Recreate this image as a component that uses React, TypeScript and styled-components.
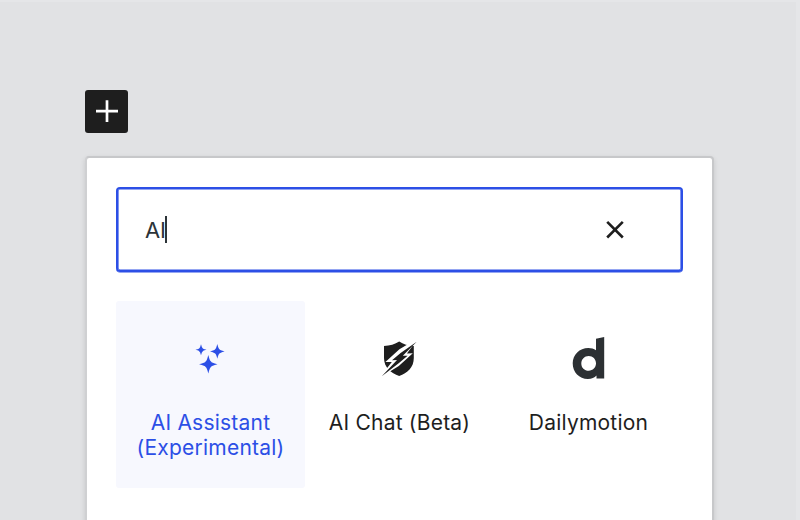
import React from "react";
import styled, { createGlobalStyle } from "styled-components";

const GlobalStyle = createGlobalStyle`
  * { box-sizing: border-box; }
  body { margin: 0; overflow: hidden; background: #e1e2e4; }
`;

const Canvas = styled.main`
  display: flex;
  flex-direction: column;
  align-items: flex-start;
  width: 800px;
  height: 520px;
  padding: 88px 0 0 85px;
  overflow: hidden;
  background: #e1e2e4;
  border-top: 2px solid #e5e6e8;
  border-right: 4px solid #e5e6e8;
  font-family: Inter, "Liberation Sans", sans-serif;
  color: #1e1e1e;
`;

const InserterToggle = styled.button`
  display: flex;
  width: 43.4px;
  height: 43px;
  padding: 0;
  border: 0;
  border-radius: 3px;
  background: #1e1e1e;
`;

const Popover = styled.section`
  flex: none;
  width: 629px;
  height: 420px;
  margin-top: 23px;
  padding: 29px 29px 0;
  background: #fff;
  background-clip: padding-box;
  border: 2px solid #c7c8ca;
  border-left-color: #cfd0d2;
  border-radius: 4px;
  box-shadow: 0 2px 5px rgba(0, 0, 0, 0.12);
`;

const SearchField = styled.label`
  display: flex;
  align-items: center;
  justify-content: space-between;
  width: 567px;
  height: 85px;
  padding: 0 51px 0 27px;
  border: 2px solid #2c4fe6;
  border-radius: 4px;
  box-shadow: inset 0 0 0 0.6px #2c4fe6, 0 0.5px 0 #2c4fe6;
`;

const Query = styled.span`
  display: flex;
  align-items: center;
  font-size: 22px;
  letter-spacing: -0.3px;
  color: #2c3338;
`;

const Caret = styled.i`
  width: 2px;
  height: 27px;
  margin-left: -1px;
  background: #2c3338;
`;

const Results = styled.div`
  display: grid;
  grid-template-columns: repeat(3, 189px);
  margin-top: 29px;
`;

const BlockTile = styled.div<{ $active?: boolean }>`
  display: flex;
  flex-direction: column;
  align-items: center;
  height: 187px;
  padding-top: 29px;
  border-radius: 3px;
  background: ${(p) => (p.$active ? "#f7f8fe" : "transparent")};
  color: ${(p) => (p.$active ? "#2c4fe6" : "#1e1e1e")};
`;

const Title = styled.span`
  margin-top: 24px;
  font-size: 21px;
  line-height: 25px;
  letter-spacing: 0.22px;
  text-align: center;
  white-space: pre-line;
`;

const star = (x: number, y: number, r: number) => {
  const k = r * 0.3;
  return `M${x} ${y - r}Q${x + k * 0.55} ${y - k * 1.1} ${x + k} ${y - k}Q${x + k * 1.1} ${y - k * 0.55} ${x + r} ${y}Q${x + k * 1.1} ${y + k * 0.55} ${x + k} ${y + k}Q${x + k * 0.55} ${y + k * 1.1} ${x} ${y + r}Q${x - k * 0.55} ${y + k * 1.1} ${x - k} ${y + k}Q${x - k * 1.1} ${y + k * 0.55} ${x - r} ${y}Q${x - k * 1.1} ${y - k * 0.55} ${x - k} ${y - k}Q${x - k * 0.55} ${y - k * 1.1} ${x} ${y - r}Z`;
};

const SparklesIcon = () => (
  <svg width="61" height="56" viewBox="0 0 61 56" fill="currentColor">
    <path d={star(21, 19.8, 5.5)} />
    <path d={star(37.3, 21.4, 7.3)} />
    <path d={star(28.3, 34.2, 9.2)} />
  </svg>
);

const ShieldIcon = () => (
  <svg width="61" height="56" viewBox="0.6 0 61 56">
    <path
      d="M30.8 11.5C34.8 14.3 39.8 15.7 45.4 16V28C45.4 37.4 39 43.3 30.8 46C22.5 43.3 15.6 37.4 15.6 28V16C21.5 15.7 26.6 14.3 30.8 11.5Z"
      fill="#1e1e1e"
    />
    <path d="M50 8L31 19.2L17 32L23.4 32L11 48L30.4 36L44.4 23.2L38.5 23.4Z" fill="#fff" />
    <path d="M48.3 11.8L32.2 22.9L23.6 30.2L28.6 30L13.4 46.2L30.6 33.1L39.2 25.7L34.4 25.8Z" fill="#1e1e1e" />
  </svg>
);

const DailymotionIcon = () => (
  <svg width="61" height="56" viewBox="0 0 61 56" fill="#2c3033">
    <path
      fillRule="evenodd"
      d="M46.2 7L38 8.8V20.2C35.8 18.6 33.4 17.9 30.3 17.9C21.5 17.9 14.7 24.6 14.7 33.3C14.7 42.2 21.2 49 29.9 49C33.7 49 36.5 47.8 38.5 45.5V48.4H46.2ZM30.7 25.9C34.8 25.9 38 29.1 38 33.3C38 37.6 34.8 40.7 30.7 40.7C26.5 40.7 23.3 37.6 23.3 33.4C23.3 29.2 26.5 25.9 30.7 25.9Z"
    />
  </svg>
);

export default function App() {
  return (
    <>
      <GlobalStyle />
      <Canvas>
        <InserterToggle aria-label="Add block">
          <svg width="43" height="43" viewBox="0 0 43 43" stroke="#fff" strokeWidth="2.7">
            <path d="M11 21.2H33M22 10.2V32" />
          </svg>
        </InserterToggle>
        <Popover>
          <SearchField>
            <Query>
              AI
              <Caret />
            </Query>
            <svg width="30" height="30" viewBox="0 0.3 30 30" stroke="#1e1e1e" strokeWidth="2.6">
              <path d="M7.2 7.2L22.8 22.8M22.8 7.2L7.2 22.8" />
            </svg>
          </SearchField>
          <Results>
            <BlockTile $active>
              <SparklesIcon />
              <Title>{"AI Assistant\n(Experimental)"}</Title>
            </BlockTile>
            <BlockTile>
              <ShieldIcon />
              <Title>AI Chat (Beta)</Title>
            </BlockTile>
            <BlockTile>
              <DailymotionIcon />
              <Title>Dailymotion</Title>
            </BlockTile>
          </Results>
        </Popover>
      </Canvas>
    </>
  );
}
